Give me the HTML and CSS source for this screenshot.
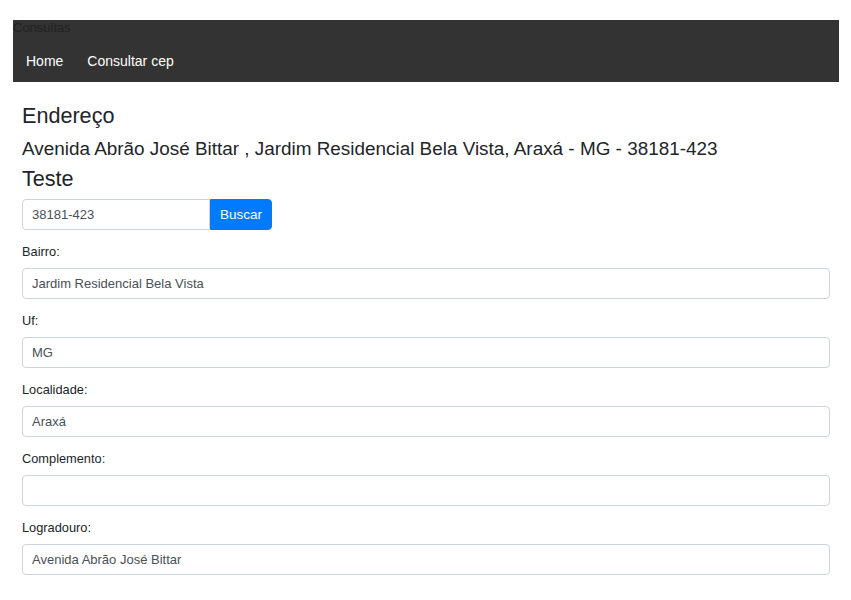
FILE: index.html
```html
<!DOCTYPE html>
<html lang="pt">
<head>
<meta charset="utf-8">
<title>Consultas</title>
<link rel="stylesheet" href="styles.css">
</head>
<body>
<div class="page">
  <nav class="navbar">
    <div class="brand">Consultas</div>
    <div class="nav-links">
      <a class="nav-link" href="#">Home</a>
      <a class="nav-link" href="#">Consultar cep</a>
    </div>
  </nav>
  <main class="content">
    <h2 class="title">Endereço</h2>
    <h4 class="address">Avenida Abrão José Bittar , Jardim Residencial Bela Vista, Araxá - MG - 38181-423</h4>
    <h2 class="title title-test">Teste</h2>
    <div class="input-group">
      <input class="input input-cep" type="text" value="38181-423">
      <button class="btn" type="button">Buscar</button>
    </div>
    <div class="form-group">
      <label class="label">Bairro:</label>
      <input class="input" type="text" value="Jardim Residencial Bela Vista">
    </div>
    <div class="form-group">
      <label class="label">Uf:</label>
      <input class="input" type="text" value="MG">
    </div>
    <div class="form-group">
      <label class="label">Localidade:</label>
      <input class="input" type="text" value="Araxá">
    </div>
    <div class="form-group">
      <label class="label">Complemento:</label>
      <input class="input" type="text" value="">
    </div>
    <div class="form-group">
      <label class="label">Logradouro:</label>
      <input class="input" type="text" value="Avenida Abrão José Bittar">
    </div>
  </main>
</div>
</body>
</html>
```

FILE: styles.css
```css
* { box-sizing: border-box; }
html, body {
  margin: 0;
  padding: 0;
  background: #fff;
  font-family: "Liberation Sans", Arial, sans-serif;
  color: #212529;
}
.page {
  padding: 20px 12px 0 13px;
}
.navbar {
  background: #333333;
}
.brand {
  font-size: 13px;
  line-height: 16px;
  color: #222222;
}
.nav-links {
  display: flex;
  padding: 15px 0 11px 1px;
}
.nav-link {
  font-size: 14px;
  line-height: 20px;
  color: #ffffff;
  text-decoration: none;
  padding: 0 12px;
}
.content {
  padding: 19px 9px 0 9px;
}
.title {
  margin: 0;
  font-size: 21.6px;
  font-weight: normal;
  line-height: 30px;
}
.address {
  margin: 3px 0 0 0;
  font-size: 18.9px;
  font-weight: normal;
  line-height: 30px;
}
.title-test {
  line-height: 26px;
  margin-top: 2px;
}
.input-group {
  display: flex;
  margin-top: 7px;
  margin-bottom: 13px;
}
.input {
  display: block;
  width: 100%;
  height: 31px;
  border: 1px solid #ced4da;
  border-radius: 4px;
  padding: 0 9px;
  font-family: "Liberation Sans", Arial, sans-serif;
  font-size: 13px;
  color: #495057;
  background: #fff;
}
.input-cep {
  width: 188px;
  border-radius: 4px 0 0 4px;
}
.btn {
  width: 62px;
  height: 31px;
  border: 1px solid #007bff;
  background: #007bff;
  color: #fff;
  border-radius: 0 4px 4px 0;
  font-family: "Liberation Sans", Arial, sans-serif;
  font-size: 13.5px;
  padding: 0;
}
.form-group {
  margin-bottom: 13px;
}
.label {
  display: block;
  font-size: 12.8px;
  line-height: 18px;
  margin-bottom: 7px;
  color: #212529;
}
```
